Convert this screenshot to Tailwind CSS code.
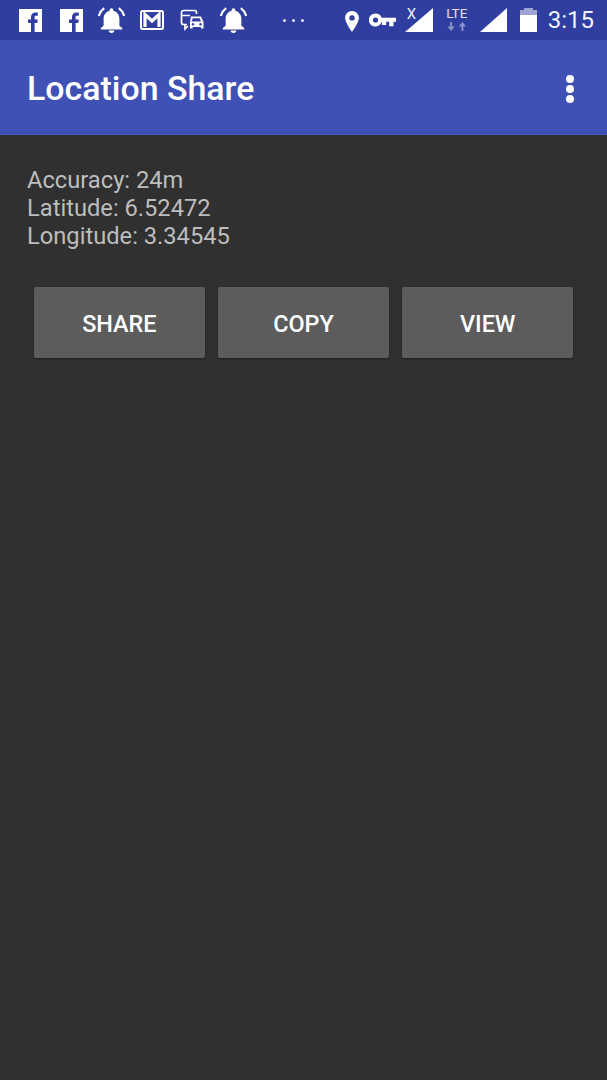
<!DOCTYPE html>
<html lang="en">
<head>
    <meta charset="UTF-8">
    <meta name="viewport" content="width=device-width, initial-scale=1.0">
    <title>Location Share</title>
    <script src="https://cdn.jsdelivr.net/npm/@tailwindcss/browser@4"></script>
</head>
<body class="bg-[#303030] font-['Roboto',sans-serif] overflow-hidden">
<div class="w-[607px] h-[1080px] flex flex-col">
    <!-- status bar -->
    <div class="h-[40px] bg-[#303f9f] flex items-center text-white shrink-0">
        <div class="flex items-center pl-[19px] h-full">
            <svg class="w-[23px] h-[23px] mr-[18px]" viewBox="0 0 23 23"><rect width="23" height="23" fill="#fff"/><path fill="#303f9f" d="M12 23v-9H9v-3.500h3V8c0-3 1.800-4.600 4.400-4.600h2.400v3.400h-1.600c-1.200 0-1.600.6-1.600 1.600v2.100h3.200l-.5 3.500h-2.700v9z"/></svg>
            <svg class="w-[23px] h-[23px] mr-[15px]" viewBox="0 0 23 23"><rect width="23" height="23" fill="#fff"/><path fill="#303f9f" d="M12 23v-9H9v-3.500h3V8c0-3 1.800-4.600 4.400-4.600h2.400v3.400h-1.600c-1.200 0-1.600.6-1.600 1.600v2.100h3.200l-.5 3.500h-2.700v9z"/></svg>
            <svg class="w-[27px] h-[26px] mr-[15px]" viewBox="2 1.500 24 23"><path fill="#fff" d="M14 2.500c-.9 0-1.600.7-1.600 1.600v.7C9 5.600 7 8.500 7 12v6l-2.500 2.200V21.500h19V20.200L21 18v-6c0-3.500-2-6.400-5.400-7.200v-.7c0-.9-.7-1.600-1.600-1.600zM11.500 22.300a2.500 2.200 0 0 0 5 0z"/><path fill="none" stroke="#fff" stroke-width="1.800" d="M7.500 2.500C5 4.300 3.400 6.700 2.700 9.500M20.500 2.500c2.500 1.800 4.100 4.200 4.800 7"/></svg>
            <svg class="w-[24px] h-[20px] mr-[16px]" viewBox="0 0 24 20"><rect x="1" y="1" width="22" height="18" rx="1.500" fill="none" stroke="#fff" stroke-width="2"/><path fill="none" stroke="#fff" stroke-width="3.200" d="M5 17V4.500l7 6.500 7-6.500V17"/></svg>
            <svg class="w-[25px] h-[23px] mr-[15px]" viewBox="0 0 25 23"><path fill="none" stroke="#fff" stroke-width="1.700" d="M7 15.500H3.500a2 2 0 0 1-2-2V3.500a2 2 0 0 1 2-2h11a2 2 0 0 1 2 2V5M1.500 6.500H10M5 15.500V20l3-3"/><path fill="#fff" d="M11 7.500h10l2.500 5.500v6.500h-2.600V18H12.600v1.500H10V13zM12.800 9.300 11.500 12.500h9.500l-1.300-3.200z"/><circle cx="13" cy="15.200" r="1.200" fill="#303f9f"/><circle cx="20.500" cy="15.200" r="1.200" fill="#303f9f"/></svg>
            <svg class="w-[27px] h-[26px]" viewBox="2 1.500 24 23"><path fill="#fff" d="M14 2.500c-.9 0-1.600.7-1.600 1.600v.7C9 5.600 7 8.500 7 12v6l-2.500 2.200V21.500h19V20.200L21 18v-6c0-3.500-2-6.400-5.400-7.200v-.7c0-.9-.7-1.600-1.600-1.600zM11.500 22.300a2.500 2.200 0 0 0 5 0z"/><path fill="none" stroke="#fff" stroke-width="1.800" d="M7.500 2.500C5 4.300 3.400 6.700 2.700 9.500M20.500 2.500c2.500 1.800 4.100 4.200 4.800 7"/></svg>
            <div class="flex gap-[6px] ml-[36px]">
                <span class="w-[3px] h-[3px] rounded-full bg-white/90"></span>
                <span class="w-[3px] h-[3px] rounded-full bg-white/90"></span>
                <span class="w-[3px] h-[3px] rounded-full bg-white/90"></span>
            </div>
        </div>
        <div class="flex items-center ml-auto pr-[13px] h-full">
            <svg class="w-[16px] h-[23px] mr-[9px] mt-[2px]" viewBox="0 0 16 25"><path fill="#fff" fill-rule="evenodd" d="M8 1C3.700 1 .5 4.300.5 8.500.5 14 8 24 8 24s7.500-10 7.500-15.500C15.500 4.300 12.300 1 8 1zm0 4.700a2.900 2.900 0 1 1 0 5.800 2.900 2.900 0 0 1 0-5.800z"/></svg>
            <svg class="w-[27px] h-[14px] mr-[9px]" viewBox="0 0 27 14"><path fill="#fff" fill-rule="evenodd" d="M6.500.5a6.500 6.500 0 0 1 6.100 4.200H27v4h-2.500v4.500h-4.300V8.700h-3v3.300h-4.300V8.700h-.3A6.500 6.500 0 1 1 6.500.5zm0 3.900a2.600 2.600 0 1 0 0 5.200 2.600 2.600 0 0 0 0-5.200z"/></svg>
            <div class="relative w-[28px] h-[24px] mr-[12px]">
                <svg class="w-[28px] h-[24px]" viewBox="0 0 28 24"><path fill="#fff" d="M28 0v24H0z"/></svg>
                <span class="absolute left-[2px] top-[-2px] text-[15px] leading-[16px] text-white/90">X</span>
            </div>
            <div class="w-[24px] h-[24px] mr-[11px] flex flex-col items-center">
                <span class="text-[13.5px] leading-[12px] mt-[-1px] text-white/85">LTE</span>
                <svg class="w-[22px] h-[10px] mt-[3px]" viewBox="0 0 24 11"><path fill="#fff" fill-opacity=".45" d="M4.500 0h2v5h3l-4 5-4-5h3zM17 10h2V5h3l-4-5-4 5h3z"/></svg>
            </div>
            <svg class="w-[27px] h-[24px] mr-[13px]" viewBox="0 0 27 24"><path fill="#fff" d="M27 0v24H0z"/></svg>
            <div class="w-[17px] h-[21px] mr-[11px] mt-[3px] bg-white relative">
                <div class="absolute left-0 top-[-1px] w-full h-[5px] bg-[#9ea5d4]"></div>
                <div class="absolute left-[4px] top-[-3px] w-[9px] h-[2px] bg-[#9ea5d4]"></div>
            </div>
            <span class="text-[24px] leading-none text-white/95 font-normal">3:15</span>
        </div>
    </div>

    <!-- app bar -->
    <header class="h-[95px] bg-[#3f51b5] flex items-center justify-between pl-[27px] pr-[33px] pt-[3px] shrink-0 border-b border-[#4557bd]">
        <h1 class="text-[33.9px] font-medium text-white leading-none">Location Share</h1>
        <div class="flex flex-col gap-[2px]">
            <span class="w-[8px] h-[8px] rounded-full bg-white"></span>
            <span class="w-[8px] h-[8px] rounded-full bg-white"></span>
            <span class="w-[8px] h-[8px] rounded-full bg-white"></span>
        </div>
    </header>

    <!-- content -->
    <main class="flex-1 pt-[31px] px-[27px]">
        <div class="text-[23.7px] leading-[28px] text-[#bdbdbd]">
            <p>Accuracy: 24m</p>
            <p>Latitude: 6.52472</p>
            <p>Longitude: 3.34545</p>
        </div>
        <div class="flex gap-[13.5px] mt-[37px] ml-[7px] w-[539px]">
            <button class="flex-1 h-[71px] pt-[4px] bg-[#5c5c5c] rounded-[2px] shadow-[0_1px_2px_rgba(0,0,0,0.35)] text-white text-[23.4px] font-medium">SHARE</button>
            <button class="flex-1 h-[71px] pt-[4px] bg-[#5c5c5c] rounded-[2px] shadow-[0_1px_2px_rgba(0,0,0,0.35)] text-white text-[23.4px] font-medium">COPY</button>
            <button class="flex-1 h-[71px] pt-[4px] bg-[#5c5c5c] rounded-[2px] shadow-[0_1px_2px_rgba(0,0,0,0.35)] text-white text-[23.4px] font-medium">VIEW</button>
        </div>
    </main>
</div>
</body>
</html>
